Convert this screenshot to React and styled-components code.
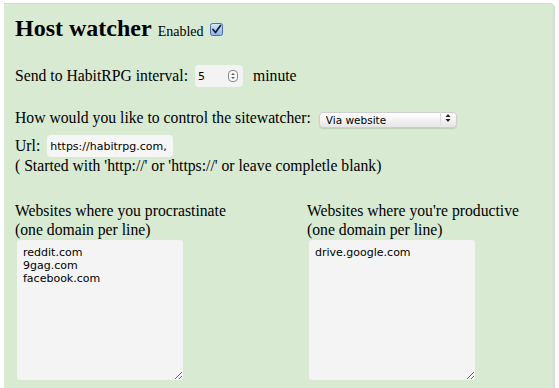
import React from "react";
import styled, { createGlobalStyle } from "styled-components";

const Global = createGlobalStyle`
  html, body { margin: 0; padding: 0; background: #ffffff; }
  body { font-family: "Liberation Serif", "Times New Roman", serif; font-size: 15.7px; color: #000; }
`;

const Page = styled.div`
  padding: 3px 0 0 4px;
  width: 551px;
`;

const Panel = styled.section`
  background: #d9ead3;
  border-top: 1px solid #d6d6d6;
  border-right: 2px solid #d9d9d9;
  border-top-right-radius: 5px;
  padding: 10px 11px 20px 11px;
  min-height: 380px;
  box-sizing: border-box;
`;

const TitleRow = styled.div`
  display: flex;
  align-items: baseline;
  gap: 6px;
  height: 28px;
`;

const Title = styled.h2`
  margin: 0;
  font-size: 24px;
  line-height: 28px;
  font-weight: bold;
`;

const Small = styled.span`
  font-size: 14px;
`;

const CheckBox = styled.span`
  display: inline-flex;
  width: 13px;
  height: 13px;
  align-self: center;
  margin-top: 3px;
`;

const Row = styled.div`
  display: flex;
  align-items: center;
  height: ${(p) => p.$h || 18}px;
  margin-top: ${(p) => p.$mt || 0}px;
  white-space: nowrap;
`;

const Text = styled.span`
  line-height: 18px;
`;

const NumberBox = styled.div`
  position: relative;
  width: 48px;
  height: 22px;
  margin: 0 10px 0 7px;
  background: #f3f3f3;
  border-radius: 4px;
  box-sizing: border-box;
  display: flex;
  align-items: center;
`;

const NumInput = styled.input`
  width: 30px;
  border: none;
  background: transparent;
  font-family: "DejaVu Sans", "Lucida Grande", sans-serif;
  font-size: 11px;
  padding: 0 0 0 3px;
  outline: none;
  color: #000;
`;

const Spinner = styled.span`
  position: absolute;
  right: 5px;
  top: 5px;
  width: 10px;
  height: 12px;
  display: flex;
`;

const SelectWrap = styled.div`
  position: relative;
  margin-left: 8px;
  width: 138px;
  height: 16px;
`;

const Select = styled.select`
  appearance: none;
  -webkit-appearance: none;
  width: 100%;
  height: 16px;
  border: 1px solid #cfcfcf;
  border-radius: 4px;
  background: linear-gradient(#ffffff, #e6e6e6);
  font-family: "DejaVu Sans", "Lucida Grande", sans-serif;
  font-size: 10.5px;
  padding: 0 0 0 6px;
  box-sizing: border-box;
  color: #000;
  box-shadow: 0 1px 1px rgba(0, 0, 0, 0.12);
  outline: none;
`;

const SelectArrows = styled.span`
  position: absolute;
  right: 1px;
  top: 1px;
  width: 15px;
  height: 14px;
  border-left: 1px solid #dcdcdc;
  display: flex;
  align-items: center;
  justify-content: center;
  pointer-events: none;
`;

const TextInput = styled.input`
  width: 126px;
  height: 22px;
  margin-left: 7px;
  border: none;
  border-radius: 4px;
  background: #f6f6f6;
  font-family: "DejaVu Sans", "Lucida Grande", sans-serif;
  font-size: 11px;
  padding: 0 0 0 3px;
  box-sizing: border-box;
  outline: none;
  color: #000;
`;

const Columns = styled.div`
  display: grid;
  grid-template-columns: 292px 1fr;
  margin-top: 26px;
`;

const Column = styled.div`
  display: flex;
  flex-direction: column;
`;

const Label = styled.div`
  line-height: 19px;
`;

const Area = styled.textarea`
  margin: 1px 0 0 2px;
  width: 166px;
  height: 140px;
  box-sizing: border-box;
  border: none;
  border-radius: 3px;
  background: #f4f4f4;
  font-family: "DejaVu Sans", "Lucida Grande", sans-serif;
  font-size: 11px;
  line-height: 13px;
  padding: 6px 6px;
  color: #000;
  outline: none;
`;

function Check() {
  return (
    <svg width="13" height="13" viewBox="0 0 13 13">
      <defs>
        <linearGradient id="cb" x1="0" y1="0" x2="0" y2="1">
          <stop offset="0" stopColor="#d6e6fa" />
          <stop offset="1" stopColor="#8fb3e4" />
        </linearGradient>
      </defs>
      <rect x="0.5" y="0.5" width="12" height="12" rx="2" fill="url(#cb)" stroke="#4d6fa6" />
      <path d="M3 6.5 L5.5 9.5 L10.5 2.5" fill="none" stroke="#10203a" strokeWidth="1.8" strokeLinecap="round" strokeLinejoin="round" />
    </svg>
  );
}

function SpinArrows() {
  return (
    <svg width="10" height="12" viewBox="0 0 10 12">
      <rect x="0.5" y="0.5" width="9" height="11" rx="3.5" fill="#f8f8f8" stroke="#8a8a8a" />
      <path d="M3.2 5 L5 3 L6.8 5 Z" fill="#555" />
      <path d="M3.2 7 L5 9 L6.8 7 Z" fill="#555" />
    </svg>
  );
}

function SelArrows() {
  return (
    <svg width="6" height="10" viewBox="0 0 6 10">
      <path d="M0.5 4 L3 1 L5.5 4 Z" fill="#222" />
      <path d="M0.5 6 L3 9 L5.5 6 Z" fill="#222" />
    </svg>
  );
}

export default function App() {
  return (
    <>
      <Global />
      <Page>
        <Panel>
          <TitleRow>
            <Title>Host watcher</Title>
            <Small>Enabled</Small>
            <CheckBox>
              <Check />
            </CheckBox>
          </TitleRow>

          <Row $h={22} $mt={23}>
            <Text>Send to HabitRPG interval:</Text>
            <NumberBox>
              <NumInput type="text" defaultValue="5" />
              <Spinner>
                <SpinArrows />
              </Spinner>
            </NumberBox>
            <Text>minute</Text>
          </Row>

          <Row $h={18} $mt={22}>
            <Text>How would you like to control the sitewatcher:</Text>
            <SelectWrap>
              <Select defaultValue="website">
                <option value="website">Via website</option>
              </Select>
              <SelectArrows>
                <SelArrows />
              </SelectArrows>
            </SelectWrap>
          </Row>

          <Row $h={22} $mt={8}>
            <Text>Url:</Text>
            <TextInput type="text" defaultValue="https://habitrpg.com," />
          </Row>

          <Row $h={18}>
            <Text>( Started with 'http://' or 'https://' or leave completle blank)</Text>
          </Row>

          <Columns>
            <Column>
              <Label>
                Websites where you procrastinate
                <br />
                (one domain per line)
              </Label>
              <Area defaultValue={"reddit.com\n9gag.com\nfacebook.com"} />
            </Column>
            <Column>
              <Label>
                Websites where you're productive
                <br />
                (one domain per line)
              </Label>
              <Area defaultValue={"drive.google.com"} />
            </Column>
          </Columns>
        </Panel>
      </Page>
    </>
  );
}
